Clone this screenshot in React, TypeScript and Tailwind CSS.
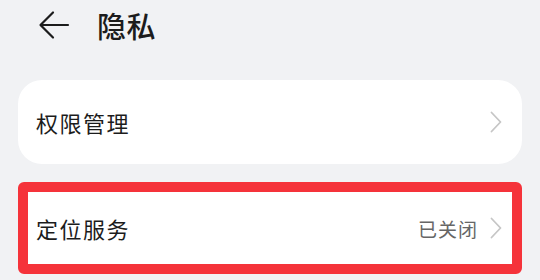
import React from "react";

const Chevron = () => (
  <svg width="12" height="22" viewBox="0 0 12 22" fill="none">
    <path d="M1.5 1.5 L10.5 11 L1.5 20.5" stroke="#c6c6c6" strokeWidth="1.8" strokeLinecap="round" strokeLinejoin="round" />
  </svg>
);

export default function App() {
  return (
    <div
      className="w-[540px] h-[280px] bg-[#f1f2f4] overflow-hidden"
      style={{ fontFamily: '"Noto Sans CJK SC", "Noto Sans", sans-serif' }}
    >
      <div className="h-[50px] flex items-center pl-[38px]">
        <svg width="32" height="30" viewBox="0 0 32 30" fill="none">
          <path d="M30 15 H3 M15 2.5 L2.5 15 L15 27.5" stroke="#1c1c1c" strokeWidth="2.2" strokeLinecap="round" strokeLinejoin="round" />
        </svg>
        <span className="ml-[27px] text-[29px] leading-none font-medium text-[#1c1c1c] tracking-[0.5px]">隐私</span>
      </div>
      <div className="px-[18px] pt-[30px] flex flex-col gap-[18px]">
        <div className="h-[84px] bg-white rounded-[24px] flex items-center justify-between pl-[18px] pr-[20px]">
          <span className="text-[22px] leading-none text-[#1c1c1c] tracking-[1.5px]">权限管理</span>
          <Chevron />
        </div>
        <div className="h-[92px] bg-white border-[10px] border-[#f5333a] rounded-[6px] flex items-center justify-between pl-[8px] pr-[10px]">
          <span className="text-[22px] leading-none text-[#1c1c1c] tracking-[1.5px]">定位服务</span>
          <div className="flex items-center gap-[12px]">
            <span className="text-[19px] leading-none text-[#666666] tracking-[1px]">已关闭</span>
            <Chevron />
          </div>
        </div>
      </div>
    </div>
  );
}
